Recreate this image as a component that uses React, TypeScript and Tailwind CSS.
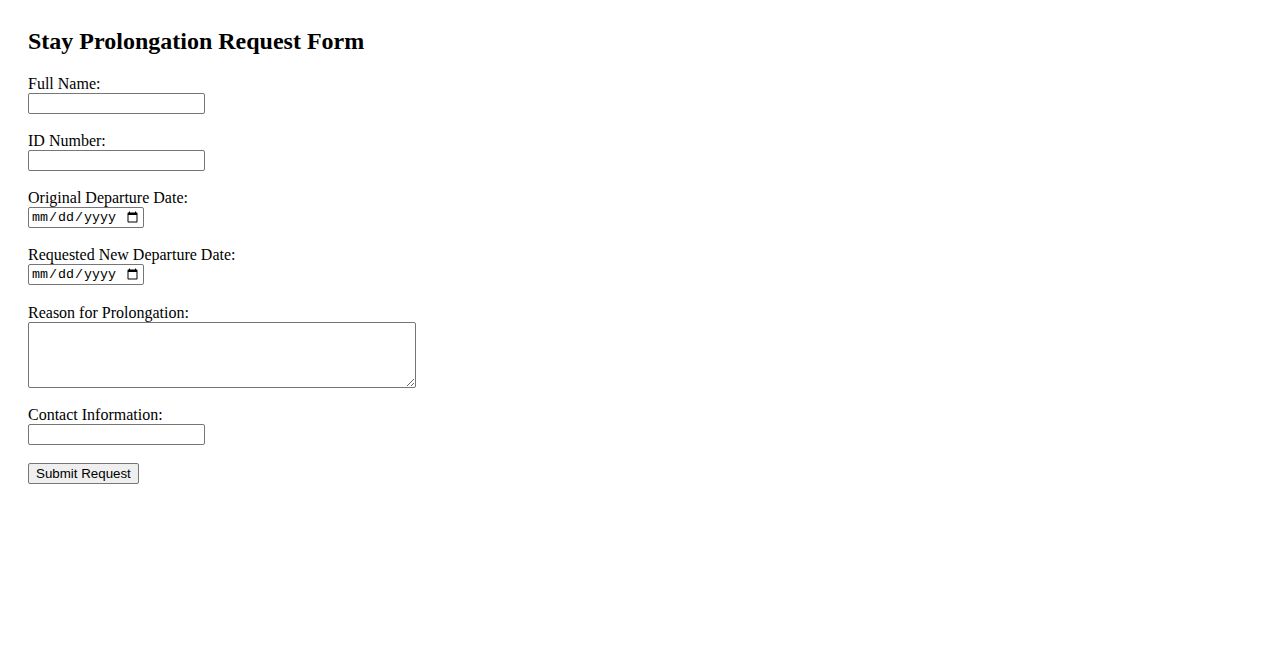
export default function App() {
  return (
    <div className="min-h-screen bg-white px-[28px] pt-[28px] font-['Liberation_Serif',serif] text-[16px] text-black">
      <h2 className="mb-[20px] text-[24px] font-bold leading-[27px]">
        Stay Prolongation Request Form
      </h2>

      <form onSubmit={(e) => e.preventDefault()}>
        <div className="mb-[18px]">
          <label className="block leading-[18px]">Full Name:</label>
          <input
            type="text"
            className="block h-[21px] w-[177px] rounded-[2px] border border-[#767676] bg-white px-[2px] py-[1px] font-['Liberation_Sans',sans-serif] text-[13.33px]"
          />
        </div>

        <div className="mb-[18px]">
          <label className="block leading-[18px]">ID Number:</label>
          <input
            type="text"
            className="block h-[21px] w-[177px] rounded-[2px] border border-[#767676] bg-white px-[2px] py-[1px] font-['Liberation_Sans',sans-serif] text-[13.33px]"
          />
        </div>

        <div className="mb-[18px]">
          <label className="block leading-[18px]">Original Departure Date:</label>
          <input
            type="date"
            className="block h-[21px] w-[116px] rounded-[2px] border border-[#767676] bg-white px-[2px] py-[1px] font-['Liberation_Mono',monospace] text-[13.33px]"
          />
        </div>

        <div className="mb-[18px]">
          <label className="block leading-[18px]">Requested New Departure Date:</label>
          <input
            type="date"
            className="block h-[21px] w-[116px] rounded-[2px] border border-[#767676] bg-white px-[2px] py-[1px] font-['Liberation_Mono',monospace] text-[13.33px]"
          />
        </div>

        <div className="mt-[19px] mb-[18px]">
          <label className="block leading-[18px]">Reason for Prolongation:</label>
          <textarea
            rows={4}
            className="block h-[66px] w-[388px] resize rounded-[2px] border border-[#767676] bg-white px-[2px] py-[2px] font-['Liberation_Mono',monospace] text-[13.33px]"
          />
        </div>

        <div className="mb-[18px]">
          <label className="block leading-[18px]">Contact Information:</label>
          <input
            type="text"
            className="block h-[21px] w-[177px] rounded-[2px] border border-[#767676] bg-white px-[2px] py-[1px] font-['Liberation_Sans',sans-serif] text-[13.33px]"
          />
        </div>

        <button
          type="submit"
          className="block h-[21px] whitespace-nowrap rounded-[2px] border border-[#767676] bg-[#efefef] px-[7px] py-[1px] font-['Liberation_Sans',sans-serif] text-[13.33px] leading-[17px]"
        >
          Submit Request
        </button>
      </form>
    </div>
  );
}
